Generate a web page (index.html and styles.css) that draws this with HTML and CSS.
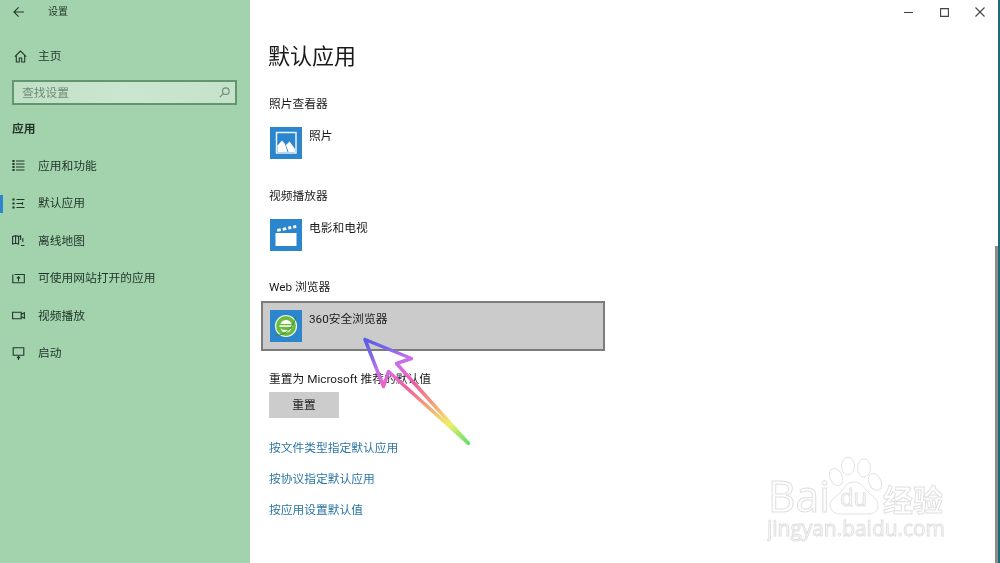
FILE: index.html
```html
<!DOCTYPE html>
<html lang="zh-CN">
<head>
  <meta charset="UTF-8" />
  <meta name="viewport" content="width=device-width, initial-scale=1.0" />
  <title>设置</title>
  <link rel="stylesheet" href="styles.css">
</head>
<body>
  <div class="window">

    <!-- Sidebar -->
    <aside class="sidebar">
      <div class="title-row">
        <svg class="back-icon" width="12" height="12" viewBox="0 0 12 12"><path d="M11 6H1.2M5.6 1.4 1 6l4.6 4.6" /></svg>
        <span class="app-title">设置</span>
      </div>

      <div class="home-row">
        <svg class="nav-icon" width="13" height="13" viewBox="0 0 13 13"><path d="M.8 6.600 6.500 1l5.700 5.600M2.300 5.400V12h3V8h2.400v4h3V5.400" /></svg>
        <span>主页</span>
      </div>

      <div class="search-box">
        <span>查找设置</span>
        <svg class="search-icon" width="11" height="11" viewBox="0 0 11 11"><circle cx="6.800" cy="4.200" r="3.300" /><path d="M4.400 6.600.8 10.200" /></svg>
      </div>

      <div class="group-title">应用</div>

      <nav class="nav-list">
        <div class="nav-item">
          <svg class="nav-icon" width="13" height="13" viewBox="0 0 13 13"><path d="M4 2h8.500M4 5h8.500M4 8h8.500M4 11h8.500" /><path class="dots" d="M.4 1h2.200v2H.4zM.4 4h2.200v2H.4zM.4 7h2.200v2H.4zM.4 10h2.200v2H.4z" /></svg>
          <span>应用和功能</span>
        </div>
        <div class="nav-item active">
          <svg class="nav-icon" width="13" height="13" viewBox="0 0 13 13"><path d="M4.500 2.500h8M4.500 6.500h5.500M4.500 10.500h8M10.500 5v3" /><path class="dots" d="M.4 1.400h2.200v2.200H.4zM.4 5.400h2.200v2.200H.4zM.4 9.400h2.200v2.200H.4z" /></svg>
          <span>默认应用</span>
        </div>
        <div class="nav-item">
          <svg class="nav-icon" width="13" height="13" viewBox="0 0 13 13"><path d="M.6 2.500 3.600 1.600 6.600 2.500V10L3.600 9.200.6 10ZM3.600 1.600v7.600M6.600 2.500 8.600 1.800V6M10.800 4v4M9 11.500h3.400" /></svg>
          <span>离线地图</span>
        </div>
        <div class="nav-item">
          <svg class="nav-icon" width="13" height="13" viewBox="0 0 13 13"><path d="M2.500 2.500h9.800v8.200H.8V2.500M6.500 9.500V5M4.800 6.400 6.500 4.800l1.700 1.600" /></svg>
          <span>可使用网站打开的应用</span>
        </div>
        <div class="nav-item">
          <svg class="nav-icon" width="13" height="13" viewBox="0 0 13 13"><path d="M.6 3.200h8.600v6.600H.6zM9.200 5.600l3.200-1.800v5.400L9.200 7.400" /></svg>
          <span>视频播放</span>
        </div>
        <div class="nav-item">
          <svg class="nav-icon" width="13" height="13" viewBox="0 0 13 13"><path d="M1.200.8h10.600v7.400H1.200zM6.500 13V9.600M5 11l1.500-1.500L8 11" /></svg>
          <span>启动</span>
        </div>
      </nav>
    </aside>

    <!-- Main content -->
    <main class="content">
      <div class="window-controls">
        <svg width="9" height="9" viewBox="0 0 9 9"><path d="M0 4.500h9" /></svg>
        <svg width="9" height="9" viewBox="0 0 9 9"><path d="M.6.6h7.800v7.800H.6z" /></svg>
        <svg width="10" height="10" viewBox="0 0 10 10"><path d="M.5.5l9 9M9.500.5l-9 9" /></svg>
      </div>

      <h1 class="page-title">默认应用</h1>

      <section class="section first">
        <h2 class="section-title">照片查看器</h2>
        <div class="app-row">
          <svg class="app-icon" width="32" height="32" viewBox="0 0 32 32">
            <rect width="32" height="32" fill="#2b86cd" />
            <rect x="6.500" y="5.500" width="19.500" height="20.500" fill="none" stroke="#e8f2fa" stroke-width="1.500" />
            <path d="M7.500 18.500 12 13.500 15 17 17.500 25H7.500z" fill="#fff" />
            <path d="M16 18 19.500 14.500 25 22V25H18.500z" fill="#fff" />
          </svg>
          <span class="app-name">照片</span>
        </div>
      </section>

      <section class="section">
        <h2 class="section-title">视频播放器</h2>
        <div class="app-row">
          <svg class="app-icon" width="32" height="32" viewBox="0 0 32 32">
            <rect width="32" height="32" fill="#2b86cd" />
            <rect x="5.500" y="14" width="21" height="13" fill="#fff" />
            <path d="M7 10 10.500 9.300 11 12 7.500 12.800ZM12.500 9 16 8.200 16.500 11 13 11.700ZM18 7.800 21 7.100 21.500 10 18.500 10.600ZM23 6.700 26 6 26.500 8.900 23.500 9.500Z" fill="#fff" />
          </svg>
          <span class="app-name">电影和电视</span>
        </div>
      </section>

      <section class="section">
        <h2 class="section-title">Web 浏览器</h2>
        <div class="app-row selected">
          <svg class="app-icon" width="32" height="32" viewBox="0 0 32 32">
            <rect width="32" height="32" fill="#2b86cd" />
            <circle cx="16" cy="16" r="10.500" fill="#6cbb3c" stroke="#eef6e2" stroke-width="1.200" />
            <path d="M10.500 14C12 8.500 20 8.500 21.500 14Z" fill="#fff" />
            <rect x="9.500" y="15.300" width="13" height="1.500" fill="#fff" />
            <path d="M10.500 18C12 24 20 24 21.500 18 19 21 13 21 10.500 18Z" fill="#fff" />
            <path d="M5 25C13 27 24 18 26 6" fill="none" stroke="#2f8f3c" stroke-width="1" />
          </svg>
          <span class="app-name">360安全浏览器</span>
        </div>
      </section>

      <section class="reset">
        <h2 class="section-title">重置为 Microsoft 推荐的默认值</h2>
        <button class="reset-btn">重置</button>
      </section>

      <div class="links">
        <a>按文件类型指定默认应用</a>
        <a>按协议指定默认应用</a>
        <a>按应用设置默认值</a>
      </div>

      <div class="scrollbar"></div>
    </main>

    <!-- Annotation arrow and watermark drawn on top of the screenshot -->
    <svg class="arrow" width="1000" height="563" viewBox="0 0 1000 563">
      <defs>
        <linearGradient id="arrowGrad" gradientUnits="userSpaceOnUse" x1="468" y1="443" x2="414.700" y2="317.600">
          <stop offset="0" stop-color="#66e06a" />
          <stop offset="0.18" stop-color="#eef06a" />
          <stop offset="0.38" stop-color="#f29a78" />
          <stop offset="0.55" stop-color="#ee5fa0" />
          <stop offset="0.64" stop-color="#ea66cc" />
          <stop offset="0.76" stop-color="#c070f0" />
          <stop offset="0.87" stop-color="#7a68e8" />
          <stop offset="1" stop-color="#5a5ae0" />
        </linearGradient>
      </defs>
      <path d="M365 339.500 411.500 358.500 396.500 363.500 468.500 443.500 388.500 371.500 383.500 386.500Z" />
    </svg>

    <svg class="watermark" width="200" height="110" viewBox="0 0 200 110">
      <text class="wm-bai" x="1" y="67" textLength="62" lengthAdjust="spacingAndGlyphs">Bai</text>
      <ellipse cx="69" cy="32" rx="6" ry="9" transform="rotate(-25 69 32)" />
      <ellipse cx="81" cy="21" rx="6.500" ry="9" />
      <ellipse cx="97" cy="23" rx="6.500" ry="9" />
      <ellipse cx="108" cy="37" rx="6" ry="9" transform="rotate(-25 108 37)" />
      <path d="M87 37C95 37 97 44 102 48 107 52 111 55 111 61 111 67 106 69 100 69H74C68 69 63 66 63 60 63 54 70 52 74 47 78 42 80 37 87 37Z" />
      <text class="wm-du" x="73" y="61" textLength="27" lengthAdjust="spacingAndGlyphs">du</text>
      <text class="wm-cn" x="116" y="66">经验</text>
      <text class="wm-url" x="0" y="91" textLength="178" lengthAdjust="spacingAndGlyphs">jingyan.baidu.com</text>
    </svg>
  </div>
</body>
</html>
```

FILE: styles.css
```css
* {
  box-sizing: border-box;
}

html, body {
  margin: 0;
  padding: 0;
  height: 100%;
  overflow: hidden;
}

body {
  font-family: Roboto, "Noto Sans CJK SC", sans-serif;
  font-size: 11.75px;
  color: #1c1c1c;
  background: #fff;
}

.window {
  position: relative;
  display: flex;
  width: 1000px;
  height: 563px;
  overflow: hidden;
  filter: blur(0.4px);
}

/* Sidebar */
.sidebar {
  width: 250px;
  flex: none;
  padding-top: 3px;
  background: #a3d3ad;
  color: #1f3328;
  line-height: 18px;
}

.sidebar svg {
  fill: none;
  stroke: #22382c;
  stroke-width: 1.1;
}

.title-row {
  display: flex;
  align-items: center;
  height: 18px;
  padding-left: 13px;
}

.back-icon {
  margin-right: 23px;
}

.app-title {
  font-size: 10px;
}

.home-row {
  display: flex;
  align-items: center;
  gap: 11px;
  height: 18px;
  margin-top: 26px;
  padding-left: 14px;
}

.search-box {
  display: flex;
  align-items: center;
  justify-content: space-between;
  width: 225px;
  height: 25px;
  margin: 15px 0 0 12px;
  padding: 0 5px 0 8px;
  border: 2px solid #63966f;
  background: linear-gradient(to right, #bfe0c5, #cbe6d0 50%, #c4e2ca);
  color: #6c8b78;
}

.sidebar .search-icon {
  stroke: #6c8b78;
}

.group-title {
  margin: 15px 0 0 12px;
  font-weight: 700;
}

.nav-list {
  margin-top: 9px;
}

.nav-item {
  position: relative;
  display: flex;
  align-items: center;
  gap: 13px;
  height: 37.5px;
  padding-left: 12px;
}

.nav-item.active::before {
  content: "";
  position: absolute;
  left: 0;
  top: 10px;
  width: 3px;
  height: 18px;
  background: #2f86cf;
}

.sidebar .dots {
  fill: #22382c;
  stroke: none;
}

/* Main content */
.content {
  position: relative;
  flex: 1;
  padding: 40px 0 0 11px;
  border-right: 2px solid #1f6a78;
  background: #fff;
}

.window-controls {
  position: absolute;
  top: 7px;
  right: 13px;
  display: flex;
  align-items: center;
  gap: 26.5px;
}

.window-controls svg {
  fill: none;
  stroke: #444;
  stroke-width: 1.1;
}

.page-title {
  height: 30px;
  margin: 0 0 0 7px;
  font-size: 22px;
  font-weight: 400;
  line-height: 34px;
  color: #1a1a1a;
}

.section {
  margin-top: 18.5px;
}

.section.first {
  margin-top: 25px;
}

.section-title {
  height: 18px;
  margin: 0 0 0 8px;
  font-size: 11.75px;
  font-weight: 400;
  line-height: 18px;
}

.app-row {
  display: flex;
  align-items: flex-start;
  gap: 7px;
  width: 344px;
  height: 50px;
  margin-top: 5px;
  padding: 7px;
  border: 2px solid transparent;
  line-height: 18px;
}

.app-row.selected {
  background: #cbcbcb;
  border-color: #7c7c7c;
}

.app-icon {
  flex: none;
}

.reset {
  margin: 19px 0 0 8px;
}

.reset .section-title {
  margin-left: 0;
}

.reset-btn {
  display: block;
  width: 70px;
  height: 26px;
  margin-top: 4px;
  padding: 0 0 3px;
  border: none;
  background: #cccccc;
  color: #1c1c1c;
  font: inherit;
}

.links {
  display: flex;
  flex-direction: column;
  gap: 13px;
  margin: 21px 0 0 8px;
  line-height: 18px;
  color: #2b76a3;
}

.scrollbar {
  position: absolute;
  top: 246px;
  right: 0;
  bottom: 0;
  width: 3px;
  background: #8d8d8d;
}

/* Overlays */
.arrow {
  position: absolute;
  left: 0;
  top: 0;
  pointer-events: none;
}

.arrow path {
  fill: none;
  stroke: url(#arrowGrad);
  stroke-width: 3.5;
  stroke-linejoin: round;
  stroke-linecap: round;
}

.watermark {
  position: absolute;
  left: 767px;
  top: 445px;
}

.watermark ellipse, .watermark path {
  fill: #fff;
  stroke: #e3e3e3;
  stroke-width: 1;
}

.watermark text {
  fill: #fff;
  stroke: #e0e0e0;
  stroke-width: 1;
  font-family: "Open Sans", "Noto Sans CJK SC", sans-serif;
}

.wm-bai {
  font-size: 43px;
}

.wm-du {
  font-size: 24px;
}

.wm-cn {
  font-size: 30px;
  font-weight: 700;
}

.wm-url {
  font-size: 21px;
}
```
